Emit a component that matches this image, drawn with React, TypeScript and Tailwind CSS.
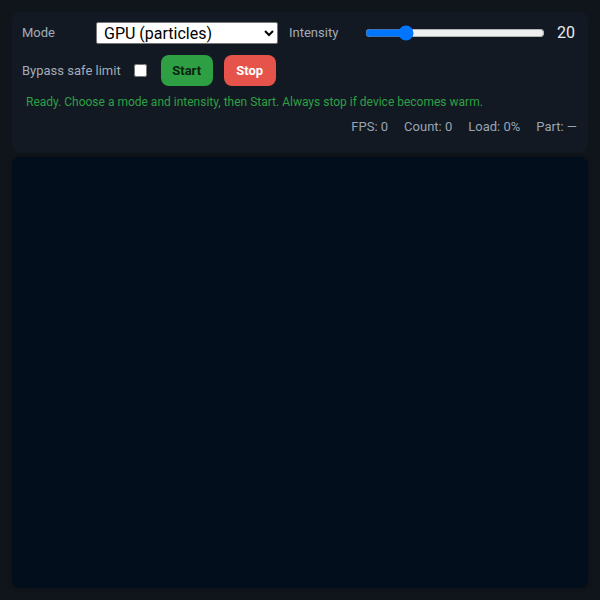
import { useState } from 'react'

export default function App() {
  const [mode, setMode] = useState('gpu')
  const [intensity, setIntensity] = useState(20)
  const [bypass, setBypass] = useState(false)

  return (
    <div className="flex h-[600px] flex-col bg-[#10151c] p-3 font-['Roboto',sans-serif]">
      {/* Controls */}
      <div className="flex flex-col rounded-lg bg-[#121922] px-[10px] pt-[10px] pb-[18px]">
        <div className="flex h-[22px] items-center">
          <span className="w-[74px] text-[13px] text-[#a3acb9]">Mode</span>
          <select
            value={mode}
            onChange={(e) => setMode(e.target.value)}
            className="h-[22px] w-[182px] rounded-[2px] border border-[#767676] bg-white pl-[3px] text-[16px] text-black"
          >
            <option value="cpu">CPU (math)</option>
            <option value="gpu">GPU (particles)</option>
            <option value="mem">Memory</option>
          </select>
          <span className="ml-[11px] w-[76px] text-[13px] text-[#a3acb9]">Intensity</span>
          <input
            type="range"
            min={0}
            max={100}
            value={intensity}
            onChange={(e) => setIntensity(Number(e.target.value))}
            className="w-[180px] accent-[#0075ff]"
          />
          <span className="ml-[12px] text-[16px] text-[#e6e9ee]">{intensity}</span>
        </div>

        <div className="mt-[11px] flex h-[31px] items-center">
          <span className="text-[13px] text-[#a3acb9]">Bypass safe limit</span>
          <input
            type="checkbox"
            checked={bypass}
            onChange={(e) => setBypass(e.target.checked)}
            className="ml-[13px] h-[13px] w-[13px]"
          />
          <button className="ml-[14px] h-[31px] w-[52px] rounded-lg bg-[#2ea043] text-[13px] font-bold text-[#0b2413]">
            Start
          </button>
          <button className="ml-[11px] h-[31px] w-[52px] rounded-lg bg-[#e5534b] text-[13px] font-bold text-white">
            Stop
          </button>
        </div>

        <p className="mt-[8px] pl-[4px] text-[12px] leading-4 text-[#2ea043]">
          Ready. Choose a mode and intensity, then Start. Always stop if device becomes warm.
        </p>

        <div className="mt-[9px] flex justify-end gap-[16px] pr-[1px] text-[13px] leading-4 text-[#9aa4b2]">
          <span>FPS: 0</span>
          <span>Count: 0</span>
          <span>Load: 0%</span>
          <span>Part: —</span>
        </div>
      </div>

      {/* Canvas */}
      <div className="mt-[4px] flex-1 rounded-lg bg-[#020e1c] shadow-[0_0_4px_rgba(0,0,0,0.35)]" />
    </div>
  )
}
